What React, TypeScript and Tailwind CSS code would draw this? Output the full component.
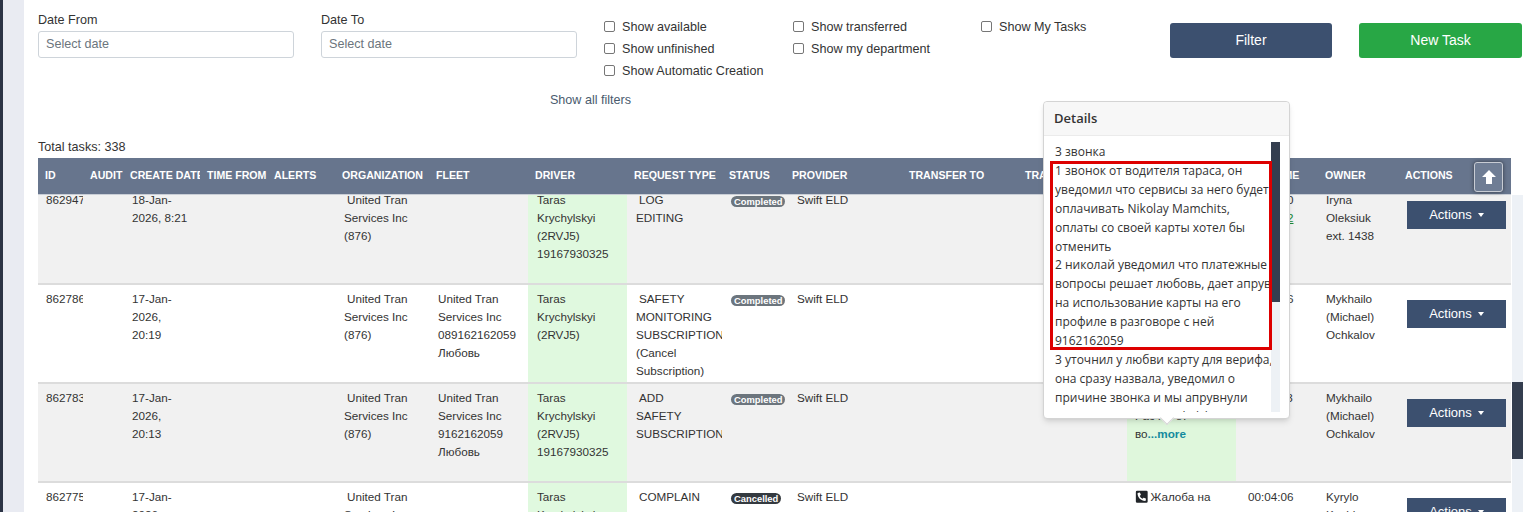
import { FaPhoneSquareAlt } from "react-icons/fa";

const gridCols =
  "grid grid-cols-[45px_40px_77px_67px_68px_94px_99px_99px_95px_63px_117px_116px_109px_109px_82px_80px_113px]";

const headers = [
  "ID",
  "AUDIT",
  "CREATE DATE",
  "TIME FROM",
  "ALERTS",
  "ORGANIZATION",
  "FLEET",
  "DRIVER",
  "REQUEST TYPE",
  "STATUS",
  "PROVIDER",
  "TRANSFER TO",
  "TRANSFER FROM",
  "DETAILS",
  "CALL TIME",
  "OWNER",
  "ACTIONS",
];

type Row = {
  id: string;
  date: string[];
  fleet: string[];
  driver: string[];
  request: string[];
  status: "Completed" | "Cancelled";
  details: React.ReactNode;
  detailsGreen: boolean;
  time: React.ReactNode;
  owner: string[];
  striped: boolean;
};

const rows: Row[] = [
  {
    id: "862947",
    date: ["18-Jan-", "2026, 8:21"],
    fleet: [],
    driver: ["Taras", "Krychylskyi", "(2RVJ5)", "19167930325"],
    request: ["LOG", "EDITING"],
    status: "Completed",
    details: null,
    detailsGreen: false,
    time: (
      <>
        <div>00:06:10</div>
        <div className="text-[#1a8a3a] underline">00:00:02</div>
      </>
    ),
    owner: ["Iryna", "Oleksiuk", "ext. 1438"],
    striped: true,
  },
  {
    id: "862786",
    date: ["17-Jan-", "2026,", "20:19"],
    fleet: ["United Tran", "Services Inc", "089162162059", "Любовь"],
    driver: ["Taras", "Krychylskyi", "(2RVJ5)"],
    request: ["SAFETY", "MONITORING", "SUBSCRIPTION", "(Cancel", "Subscription)"],
    status: "Completed",
    details: null,
    detailsGreen: false,
    time: "00:02:16",
    owner: ["Mykhailo", "(Michael)", "Ochkalov"],
    striped: false,
  },
  {
    id: "862783",
    date: ["17-Jan-", "2026,", "20:13"],
    fleet: ["United Tran", "Services Inc", "9162162059", "Любовь"],
    driver: ["Taras", "Krychylskyi", "(2RVJ5)", "19167930325"],
    request: ["ADD", "SAFETY", "SUBSCRIPTION"],
    status: "Completed",
    details: (
      <>
        <div>3 звонка</div>
        <div>Расчёт от</div>
        <div>
          во<span className="font-bold text-[#138a9e]">...more</span>
        </div>
      </>
    ),
    detailsGreen: true,
    time: "00:11:23",
    owner: ["Mykhailo", "(Michael)", "Ochkalov"],
    striped: true,
  },
  {
    id: "862775",
    date: ["17-Jan-", "2026,", "19:48"],
    fleet: [],
    driver: ["Taras", "Krychylskyi", "(2RVJ5)"],
    request: ["COMPLAIN"],
    status: "Cancelled",
    details: (
      <div className="flex items-center gap-[2px]">
        <FaPhoneSquareAlt className="text-[13.5px] text-[#212529]" />
        Жалоба на
      </div>
    ),
    detailsGreen: false,
    time: "00:04:06",
    owner: ["Kyrylo", "Kuchkov"],
    striped: false,
  },
];

const popoverLines = [
  "3 звонка",
  "1 звонок от водителя тараса, он",
  "уведомил что сервисы за него будет",
  "оплачивать Nikolay Mamchits,",
  "оплаты со своей карты хотел бы",
  "отменить",
  "2 николай уведомил что платежные",
  "вопросы решает любовь, дает апрув",
  "на использование карты на его",
  "профиле в разговоре с ней",
  "9162162059",
  "3 уточнил у любви карту для верифа,",
  "она сразу назвала, уведомил о",
  "причине звонка и мы апрувнули",
  "сервисы на Taras Krychylskyi",
];

function Lines({ lines, indent }: { lines: string[]; indent?: boolean }) {
  return (
    <>
      {lines.map((line, i) => (
        <div key={i} className={indent && i === 0 ? "pl-[3px]" : ""}>
          {line}
        </div>
      ))}
    </>
  );
}

function Check({ label }: { label: string }) {
  return (
    <label className="flex h-[22px] items-center gap-[7px] whitespace-nowrap">
      <input
        type="checkbox"
        className="h-[11px] w-[11px] appearance-none rounded-[2px] border border-[#767676] bg-white"
      />
      <span className="pt-[1px]">{label}</span>
    </label>
  );
}

function DateField({ label }: { label: string }) {
  return (
    <div className="w-[256px]">
      <div className="h-[18px] pt-[1px]">{label}</div>
      <div className="mt-[3px] flex h-[27px] items-center rounded-[3px] border border-[#ced4da] bg-white pb-[2px] pl-[7px] text-[#6c757d]">
        Select date
      </div>
    </div>
  );
}

function TableRow({ row }: { row: Row }) {
  const cell = "overflow-hidden whitespace-nowrap pt-[5px]";
  return (
    <div
      className={`${gridCols} h-[99px] border-b-2 border-[#dcdcdc] text-[11.7px] ${row.striped ? "bg-[#f1f1f1]" : "bg-white"}`}
    >
      <div className={`${cell} pl-[8px]`}>{row.id}</div>
      <div className={cell} />
      <div className={`${cell} pl-[9px]`}>
        <Lines lines={row.date} />
      </div>
      <div className={cell} />
      <div className={cell} />
      <div className={`${cell} pl-[9px]`}>
        <Lines lines={["United Tran", "Services Inc", "(876)"]} indent />
      </div>
      <div className={`${cell} pl-[9px]`}>
        <Lines lines={row.fleet} />
      </div>
      <div className={`${cell} bg-[#e0f9df] pl-[9px]`}>
        <Lines lines={row.driver} />
      </div>
      <div className={`${cell} pl-[9px]`}>
        <Lines lines={row.request} indent />
      </div>
      <div className="overflow-hidden whitespace-nowrap pl-[9px] pt-[10px]">
        <span
          className={`inline-block h-[11px] rounded-full px-[3px] align-top text-[9.4px] font-bold leading-[11px] text-white ${row.status === "Completed" ? "bg-[#6c757d]" : "bg-[#343a40]"}`}
        >
          {row.status}
        </span>
      </div>
      <div className={`${cell} pl-[12px]`}>Swift ELD</div>
      <div className={cell} />
      <div className={cell} />
      <div className={`${cell} pl-[8px] ${row.detailsGreen ? "bg-[#dff7dc]" : ""}`}>{row.details}</div>
      <div className={`${cell} pl-[12px]`}>{row.time}</div>
      <div className={`${cell} pl-[8px]`}>
        <Lines lines={row.owner} />
      </div>
      <div className="pl-[9px] pt-[15px]">
        <button className="flex h-[28px] w-[99px] items-center justify-center gap-[6px] bg-[#3c506f] text-[13px] text-white">
          Actions
          <span className="h-0 w-0 border-x-[3.5px] border-t-[4px] border-x-transparent border-t-white" />
        </button>
      </div>
    </div>
  );
}

function Popover() {
  return (
    <div className="absolute left-[1019px] top-[101px] z-20 h-[318px] w-[247px] rounded-[4px] border border-[#d4d4d4] bg-white shadow-md">
      <div className="flex h-[34px] items-center rounded-t-[4px] border-b border-[#ebebeb] bg-[#f7f7f7] pb-[2px] pl-[10px] font-['Open_Sans',sans-serif] text-[13px] font-semibold text-[#333]">
        Details
      </div>
      <div className="flex h-[276px] pl-[11px] pt-[6px]">
        <div className="w-[216px] overflow-hidden whitespace-nowrap pt-[1px] font-['Open_Sans',sans-serif] text-[12px] leading-[18.9px] text-[#333]">
          {popoverLines.map((line) => (
            <div key={line}>{line}</div>
          ))}
        </div>
        <div className="w-[9px] bg-[#edf1f5]">
          <div className="h-[160px] bg-[#343e4f]" />
        </div>
      </div>
      <div className="absolute left-[6px] top-[59px] h-[189px] w-[222px] border-[3px] border-[#dd0000]" />
      <div className="absolute bottom-[-5px] left-[118px] h-[10px] w-[10px] rotate-45 border-b border-r border-[#d4d4d4] bg-white" />
    </div>
  );
}

export default function App() {
  return (
    <div className="flex h-[512px] w-[1523px] overflow-hidden bg-white font-['Liberation_Sans',Arial,sans-serif] text-[12.6px] leading-[18px] text-[#333]">
      <div className="w-[3px] shrink-0 bg-[#2c3445]" />
      <div className="w-[21px] shrink-0 bg-[#e9ebf2]" />
      <main className="relative min-w-0 flex-1 pl-[14px]">
        <div className="flex h-[90px] pt-[10px]">
          <DateField label="Date From" />
          <div className="ml-[27px]">
            <DateField label="Date To" />
          </div>
          <div className="ml-[27px] mt-[5px] w-[189px]">
            <Check label="Show available" />
            <Check label="Show unfinished" />
            <Check label="Show Automatic Creation" />
          </div>
          <div className="mt-[5px] w-[188px]">
            <Check label="Show transferred" />
            <Check label="Show my department" />
          </div>
          <div className="mt-[5px] w-[189px]">
            <Check label="Show My Tasks" />
          </div>
          <button className="mt-[13px] h-[35px] w-[162px] rounded-[3px] bg-[#3c506f] pb-[2px] text-[14px] text-white">
            Filter
          </button>
          <button className="ml-[27px] mt-[13px] h-[35px] w-[163px] rounded-[3px] bg-[#28a745] pb-[2px] text-[14px] text-white">
            New Task
          </button>
        </div>
        <div className="w-[1105px] pt-[1px] text-center text-[#4a5b6e]">Show all filters</div>
        <div className="mt-[29px]">Total tasks: 338</div>

        <div className="relative mt-[2px] w-[1473px]">
          <div
            className={`${gridCols} relative z-10 h-[37px] items-center border-b border-[#c9ced6] bg-[#67758d] pb-[2px] text-[10.6px] font-bold text-white`}
          >
            {headers.map((title) => (
              <div key={title} className="overflow-hidden whitespace-nowrap pl-[7px]">
                {title}
              </div>
            ))}
          </div>
          <button className="absolute left-[1436px] top-[4px] z-10 flex h-[30px] w-[29px] items-center justify-center rounded-[3px] border border-[#c8ccd4] bg-[#6f7d94] shadow-[0_0_4px_rgba(0,0,0,0.5)]">
            <svg width="14" height="14" viewBox="0 0 14 14" fill="white">
              <polygon points="7,0 14,7 10,7 10,14 4,14 4,7 0,7" />
            </svg>
          </button>
        </div>

        <div className="flex h-[317px]">
          <div className="h-[317px] w-[1473px] shrink-0 overflow-hidden">
            <div className="mt-[-9px]">
              {rows.map((row) => (
                <TableRow key={row.id} row={row} />
              ))}
            </div>
          </div>
          <div className="ml-[1px] flex-1 bg-[#edf1f6]">
            <div className="mt-[187px] h-[77px] bg-[#343e4f]" />
          </div>
        </div>

        <Popover />
      </main>
    </div>
  );
}
